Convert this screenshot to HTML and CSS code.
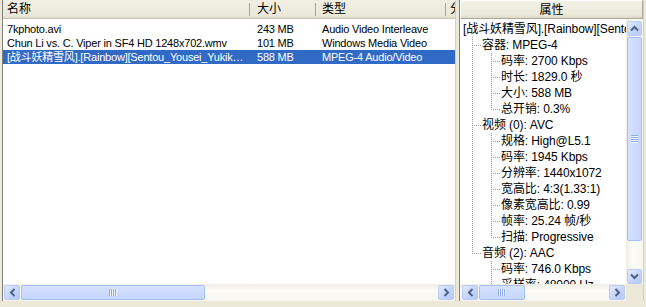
FILE: index.html
```html
<!DOCTYPE html>
<html lang="zh">
<head>
<meta charset="utf-8">
<title>MediaInfo</title>
<link rel="stylesheet" href="styles.css">
</head>
<body>
<div class="app">
  <section class="pane left">
    <div class="lv-head">
      <div class="hcell c-name">名称</div>
      <div class="hcell c-size">大小</div>
      <div class="hcell c-type">类型</div>
      <div class="hcell c-more">分辨率</div>
    </div>
    <div class="lv-body">
      <div class="row">
        <div class="cell c-name">7kphoto.avi</div>
        <div class="cell c-size">243 MB</div>
        <div class="cell c-type">Audio Video Interleave</div>
      </div>
      <div class="row">
        <div class="cell c-name">Chun Li vs. C. Viper in SF4 HD 1248x702.wmv</div>
        <div class="cell c-size">101 MB</div>
        <div class="cell c-type">Windows Media Video</div>
      </div>
      <div class="row sel">
        <div class="cell c-name">[战斗妖精雪风].[Rainbow][Sentou_Yousei_Yukikaze].mp4</div>
        <div class="cell c-size">588 MB</div>
        <div class="cell c-type">MPEG-4 Audio/Video</div>
      </div>
    </div>
    <div class="hscroll">
      <div class="sb-btn"><svg width="7" height="9" viewBox="0 0 7 9"><path d="M5.5 1 L2 4.5 L5.5 8" fill="none" stroke="#4D6185" stroke-width="2"/></svg></div>
      <div class="thumb h-thumb left-thumb"><span class="grip-h"></span></div>
      <div class="sb-track"></div>
      <div class="sb-btn"><svg width="7" height="9" viewBox="0 0 7 9"><path d="M1.5 1 L5 4.5 L1.5 8" fill="none" stroke="#4D6185" stroke-width="2"/></svg></div>
    </div>
  </section>

  <section class="pane right">
    <div class="pr-head">属性</div>
    <div class="pr-main">
      <div class="tree">
        <div class="tr"><span class="t">[战斗妖精雪风].[Rainbow][Sentou_Yousei_Yukikaze].mp4</span></div>
        <div class="tr"><i class="g tee"></i><span class="t">容器: MPEG-4</span></div>
        <div class="tr"><i class="g pipe"></i><i class="g tee"></i><span class="t">码率: 2700 Kbps</span></div>
        <div class="tr"><i class="g pipe"></i><i class="g tee"></i><span class="t">时长: 1829.0 秒</span></div>
        <div class="tr"><i class="g pipe"></i><i class="g tee"></i><span class="t">大小: 588 MB</span></div>
        <div class="tr"><i class="g pipe"></i><i class="g ell"></i><span class="t">总开销: 0.3%</span></div>
        <div class="tr"><i class="g tee"></i><span class="t">视频 (0): AVC</span></div>
        <div class="tr"><i class="g pipe"></i><i class="g tee"></i><span class="t">规格: High@L5.1</span></div>
        <div class="tr"><i class="g pipe"></i><i class="g tee"></i><span class="t">码率: 1945 Kbps</span></div>
        <div class="tr"><i class="g pipe"></i><i class="g tee"></i><span class="t">分辨率: 1440x1072</span></div>
        <div class="tr"><i class="g pipe"></i><i class="g tee"></i><span class="t">宽高比: 4:3(1.33:1)</span></div>
        <div class="tr"><i class="g pipe"></i><i class="g tee"></i><span class="t">像素宽高比: 0.99</span></div>
        <div class="tr"><i class="g pipe"></i><i class="g tee"></i><span class="t">帧率: 25.24 帧/秒</span></div>
        <div class="tr"><i class="g pipe"></i><i class="g ell"></i><span class="t">扫描: Progressive</span></div>
        <div class="tr"><i class="g ell"></i><span class="t">音频 (2): AAC</span></div>
        <div class="tr"><i class="g"></i><i class="g tee"></i><span class="t">码率: 746.0 Kbps</span></div>
        <div class="tr"><i class="g"></i><i class="g tee"></i><span class="t">采样率: 48000 Hz</span></div>
      </div>
      <div class="vscroll">
        <div class="sb-btn v"><svg width="9" height="7" viewBox="0 0 9 7"><path d="M1 5.5 L4.5 2 L8 5.5" fill="none" stroke="#4D6185" stroke-width="2"/></svg></div>
        <div class="thumb v-thumb"><span class="grip-v"></span></div>
        <div class="sb-track"></div>
        <div class="sb-btn v"><svg width="9" height="7" viewBox="0 0 9 7"><path d="M1 1.5 L4.5 5 L8 1.5" fill="none" stroke="#4D6185" stroke-width="2"/></svg></div>
      </div>
    </div>
    <div class="pr-bottom">
      <div class="hscroll r-h">
        <div class="sb-btn"><svg width="7" height="9" viewBox="0 0 7 9"><path d="M5.5 1 L2 4.5 L5.5 8" fill="none" stroke="#4D6185" stroke-width="2"/></svg></div>
        <div class="thumb h-thumb right-thumb"><span class="grip-h"></span></div>
        <div class="sb-track"></div>
        <div class="sb-btn"><svg width="7" height="9" viewBox="0 0 7 9"><path d="M1.5 1 L5 4.5 L1.5 8" fill="none" stroke="#4D6185" stroke-width="2"/></svg></div>
      </div>
      <div class="corner"></div>
    </div>
  </section>
</div>
</body>
</html>
```
FILE: styles.css
```css
* { box-sizing: border-box; }

html, body {
  margin: 0;
  width: 646px;
  height: 307px;
  overflow: hidden;
  background: #ECE9D8;
}

body {
  font: 11px "Liberation Sans", "Noto Sans CJK SC", sans-serif;
  color: #000;
}

.app {
  display: flex;
  gap: 3px;
  height: 301px;
  padding-left: 2px;
}

.pane {
  display: flex;
  flex-direction: column;
  border-left: 1px solid #7F7F7F;
  border-right: 1px solid #D4D0C8;
  background: #fff;
}

.left { width: 454px; }
.right { width: 185px; }

/* list header */
.lv-head {
  display: flex;
  height: 19px;
  flex: none;
  background: linear-gradient(#F1EFE2, #EBE9DA 80%, #DCD8C8);
  box-shadow: inset 0 -1px #C9C5B5;
  overflow: hidden;
}

.hcell {
  position: relative;
  flex: none;
  line-height: 19px;
  padding-left: 4px;
  white-space: nowrap;
  overflow: hidden;
  font-size: 12px;
}

.hcell::after {
  content: "";
  position: absolute;
  right: 0;
  top: 3px;
  width: 1px;
  height: 13px;
  background: #ACA899;
  box-shadow: 1px 0 #fff;
}

.c-name { width: 247px; }
.c-size { width: 66px; padding-left: 7px; }
.c-type { width: 130px; padding-left: 6px; }
.c-more { width: 40px; padding-left: 4px; }

.lv-body {
  flex: 1;
  padding-top: 3px;
}

.row {
  display: flex;
  height: 14px;
  line-height: 14px;
  letter-spacing: -0.2px;
}

.row .cell {
  flex: none;
  white-space: nowrap;
  overflow: hidden;
  text-overflow: ellipsis;
}

.row .c-name { padding-left: 4px; padding-right: 6px; }
.row .c-size { padding-left: 7px; }
.row .c-type { padding-left: 6px; }

.row.sel {
  background: #316AC5;
  color: #fff;
}

/* scrollbars */
.hscroll {
  display: flex;
  align-items: center;
  height: 17px;
  flex: none;
  padding: 0 1px;
  background: linear-gradient(#EFEDE4, #FCFCF8 40%, #F6F5EF);
}

.sb-btn {
  flex: none;
  width: 16px;
  height: 15px;
  display: flex;
  align-items: center;
  justify-content: center;
  border: 1px solid #BBCCF4;
  border-radius: 2px;
  background: linear-gradient(135deg, #E1EAFE, #C3D3FD 60%, #B5C8F9);
}

.sb-btn.v {
  width: 15px;
  height: 15px;
}

.sb-track { flex: 1; }

.thumb {
  flex: none;
  display: flex;
  align-items: center;
  justify-content: center;
  border: 1px solid #A8BFF3;
  border-radius: 2px;
  background: linear-gradient(#D5E1FE, #C5D5FC);
}

.h-thumb { height: 15px; margin-left: 1px; }
.left-thumb { width: 184px; }
.right-thumb { width: 46px; }

.grip-h {
  width: 8px;
  height: 7px;
  background: repeating-linear-gradient(to right, #8EABEE 0 1px, #EEF4FE 1px 2px);
}

/* right pane */
.pr-head {
  flex: none;
  height: 19px;
  line-height: 18px;
  text-align: center;
  font-size: 12px;
  background: linear-gradient(#F4F2E8, #EBE9DA 80%, #DDD9C9);
  border: 1px solid #fff;
  border-right-color: #ACA899;
  border-bottom-color: #ACA899;
}

.pr-main {
  flex: 1;
  display: flex;
  min-height: 0;
  overflow: hidden;
}

.tree {
  flex: 1;
  min-width: 0;
  overflow: hidden;
  padding-top: 2px;
}

.tr {
  display: flex;
  align-items: center;
  height: 16px;
  padding-left: 3px;
  white-space: nowrap;
}

.tr .t {
  font-size: 12px;
  line-height: 16px;
  letter-spacing: -0.1px;
}

.g {
  flex: none;
  width: 19px;
  height: 16px;
}

.pipe {
  background: repeating-linear-gradient(to bottom, #9A9A9A 0 1px, transparent 1px 2px) 9px 0 / 1px 16px no-repeat;
}

.tee {
  background:
    repeating-linear-gradient(to right, #9A9A9A 0 1px, transparent 1px 2px) 9px 8px / 9px 1px no-repeat,
    repeating-linear-gradient(to bottom, #9A9A9A 0 1px, transparent 1px 2px) 9px 0 / 1px 16px no-repeat;
}

.ell {
  background:
    repeating-linear-gradient(to right, #9A9A9A 0 1px, transparent 1px 2px) 9px 8px / 9px 1px no-repeat,
    repeating-linear-gradient(to bottom, #9A9A9A 0 1px, transparent 1px 2px) 9px 0 / 1px 9px no-repeat;
}

.vscroll {
  flex: none;
  width: 17px;
  display: flex;
  flex-direction: column;
  align-items: center;
  padding: 2px 0 0;
  background: linear-gradient(to right, #EFEDE4, #FCFCF8 40%, #F6F5EF);
}

.v-thumb {
  width: 15px;
  height: 204px;
  margin-top: 1px;
  background: linear-gradient(to right, #D5E1FE, #C5D5FC);
}

.grip-v {
  width: 7px;
  height: 8px;
  background: repeating-linear-gradient(to bottom, #8EABEE 0 1px, #EEF4FE 1px 2px);
}

.pr-bottom {
  flex: none;
  display: flex;
  height: 17px;
}

.r-h {
  flex: 1;
  padding-left: 2px;
}

.corner {
  flex: none;
  width: 17px;
  background: #ECE9D8;
}
```
